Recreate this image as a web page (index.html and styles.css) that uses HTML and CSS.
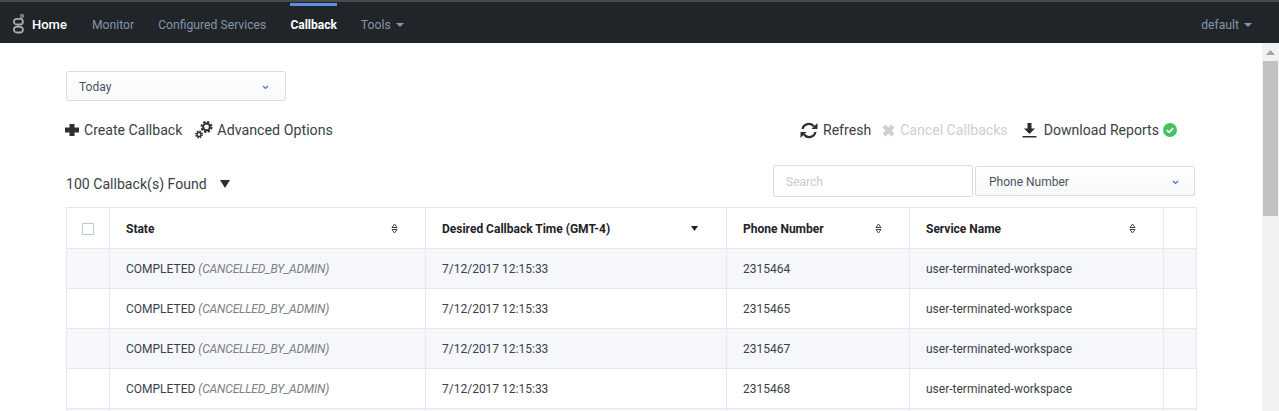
FILE: index.html
```html
<!DOCTYPE html>
<html lang="en">
<head>
<meta charset="utf-8">
<title>Callback</title>
<link rel="stylesheet" href="styles.css">
</head>
<body>
<header class="nav">
  <svg class="logo" width="14" height="20" viewBox="0 0 14 20" fill="none" stroke="#a9abad" stroke-width="1.800"><circle cx="10" cy="2" r="1.400" stroke-width="1.100"/><rect x="1.900" y="4.900" width="9" height="5.600" rx="2.800"/><rect x="1.900" y="12.900" width="9" height="5.600" rx="2.800"/><path d="M6.400 10.500v2.400" stroke-width="1.200"/></svg>
  <a class="nav-link home">Home</a>
  <a class="nav-link monitor">Monitor</a>
  <a class="nav-link services">Configured Services</a>
  <a class="nav-link active">Callback</a>
  <a class="nav-link tools">Tools<span class="caret"></span></a>
  <a class="nav-link user">default<span class="caret"></span></a>
</header>
<div class="viewport">
  <main class="content">
    <div class="select today"><span>Today</span><svg class="chev" width="7" height="5" viewBox="0 0 7 5"><path d="M1 1l2.500 2.500L6 1" fill="none" stroke="#4a6fc4" stroke-width="1.200"/></svg></div>
    <div class="toolbar">
      <div class="group left">
        <button class="action"><svg width="14" height="14" viewBox="0 0 14 14"><path d="M4.500 1h5v3.500H14v5H9.500V13h-5V9.500H0v-5h4.500z" fill="#2b2e33"/></svg>Create Callback</button>
        <button class="action gears"><svg width="18" height="18" viewBox="0 0 18 18" fill="none" stroke="#2b2e33"><circle cx="11.500" cy="6" r="3.400" stroke-width="2"/><circle cx="11.500" cy="6" r="5" stroke-width="2" stroke-dasharray="2.300 1.630"/><circle cx="4" cy="13.500" r="2" stroke-width="1.400"/><circle cx="4" cy="13.500" r="3.200" stroke-width="1.500" stroke-dasharray="1.500 1.010"/></svg>Advanced Options</button>
      </div>
      <div class="group right">
        <button class="action"><svg width="18" height="17" viewBox="0 0 18 17" fill="none"><path d="M2.500 7a6.500 6.500 0 0 1 11.500-2.500" stroke="#2b2e33" stroke-width="2.200"/><path d="M15.500 10a6.500 6.500 0 0 1-11.500 2.500" stroke="#2b2e33" stroke-width="2.200"/><path d="M17.500 1v6h-6z" fill="#2b2e33"/><path d="M.5 16v-6h6z" fill="#2b2e33"/></svg>Refresh</button>
        <button class="action disabled"><svg width="13" height="13" viewBox="0 0 13 13"><path d="M3.500 .5l3 3 3-3 3 3-3 3 3 3-3 3-3-3-3 3-3-3 3-3-3-3z" fill="#ccd0d6"/></svg>Cancel Callbacks</button>
        <button class="action download"><svg width="15" height="15" viewBox="0 0 15 15" fill="#2b2e33"><path d="M5.500 0h4v5.500H13L7.500 11 2 5.500h3.500z"/><path d="M.5 13h14v1.500H.5z"/></svg>Download Reports<svg class="ok" width="14" height="14" viewBox="0 0 14 14"><circle cx="7" cy="7" r="7" fill="#46c263"/><path d="M3.800 7.200l2.300 2.200 4.100-4.300" fill="none" stroke="#fff" stroke-width="1.700"/></svg></button>
      </div>
    </div>
    <div class="filters">
      <div class="found">100 Callback(s) Found<span class="found-caret"></span></div>
      <div class="search-group">
        <div class="search">Search</div>
        <div class="select phone"><span>Phone Number</span><svg class="chev" width="7" height="5" viewBox="0 0 7 5"><path d="M1 1l2.500 2.500L6 1" fill="none" stroke="#4a6fc4" stroke-width="1.200"/></svg></div>
      </div>
    </div>
    <table class="grid">
      <thead>
        <tr>
          <th class="c-check"><span class="check"></span></th>
          <th class="c-state"><div class="th"><span>State</span><svg class="sort" width="7" height="11" viewBox="0 0 7 11" fill="none" stroke="#444"><path d="M3.500 1L1 4.500h5z"/><path d="M3.500 10L1 6.500h5z"/></svg></div></th>
          <th class="c-time"><div class="th"><span>Desired Callback Time (GMT-4)</span><svg class="sort sort-active" width="7" height="5" viewBox="0 0 7 5"><path d="M0 0h7L3.500 5z" fill="#1f2227"/></svg></div></th>
          <th class="c-phone"><div class="th"><span>Phone Number</span><svg class="sort" width="7" height="11" viewBox="0 0 7 11" fill="none" stroke="#444"><path d="M3.500 1L1 4.500h5z"/><path d="M3.500 10L1 6.500h5z"/></svg></div></th>
          <th class="c-service"><div class="th"><span>Service Name</span><svg class="sort" width="7" height="11" viewBox="0 0 7 11" fill="none" stroke="#444"><path d="M3.500 1L1 4.500h5z"/><path d="M3.500 10L1 6.500h5z"/></svg></div></th>
          <th class="c-end"></th>
        </tr>
      </thead>
      <tbody>
        <tr class="odd"><td></td><td>COMPLETED <em>(CANCELLED_BY_ADMIN)</em></td><td>7/12/2017 12:15:33</td><td>2315464</td><td>user-terminated-workspace</td><td></td></tr>
        <tr><td></td><td>COMPLETED <em>(CANCELLED_BY_ADMIN)</em></td><td>7/12/2017 12:15:33</td><td>2315465</td><td>user-terminated-workspace</td><td></td></tr>
        <tr class="odd"><td></td><td>COMPLETED <em>(CANCELLED_BY_ADMIN)</em></td><td>7/12/2017 12:15:33</td><td>2315467</td><td>user-terminated-workspace</td><td></td></tr>
        <tr><td></td><td>COMPLETED <em>(CANCELLED_BY_ADMIN)</em></td><td>7/12/2017 12:15:33</td><td>2315468</td><td>user-terminated-workspace</td><td></td></tr>
        <tr class="odd"><td></td><td></td><td></td><td></td><td></td><td></td></tr>
      </tbody>
    </table>
  </main>
  <aside class="scrollbar">
    <svg class="arrow" width="9" height="5" viewBox="0 0 9 5"><path d="M4.500 0L9 5H0z" fill="#a3a3a3"/></svg>
    <div class="thumb"></div>
  </aside>
</div>
</body>
</html>
```
FILE: styles.css
```css
* { box-sizing: border-box; }
html, body { margin: 0; height: 411px; overflow: hidden; }
body { background: #fff; font-family: Roboto, "Liberation Sans", sans-serif; color: #3a3f47; }

.nav { height: 43px; background: #212429; border-top: 2px solid #4b4b4b; display: flex; align-items: center; padding: 0 27px 0 12px; font-size: 12.200px; }
.logo { flex: none; margin-top: 3px; }
.nav-link { color: #8195ab; display: flex; align-items: center; height: 41px; padding-top: 4px; margin-left: 24px; position: relative; }
.nav-link.home { color: #fff; font-weight: 500; font-size: 13px; margin-left: 6px; }
.nav-link.monitor { margin-left: 25px; }
.nav-link.active { color: #fff; font-weight: 700; font-size: 12px; }
.nav-link.active::before { content: ""; position: absolute; left: 0; right: 0; top: 1px; height: 3px; background: #5c8fe0; }
.nav-link.user { margin-left: auto; }
.caret { width: 0; height: 0; border: 4px solid transparent; border-top-color: #8195ab; border-bottom: 0; margin-left: 5px; margin-top: 1px; }

.viewport { display: flex; height: 368px; overflow: hidden; }
.content { flex: 1; min-width: 0; padding: 28px 66px 0; }
.scrollbar { width: 17px; flex: none; background: #f1f1f1; display: flex; flex-direction: column; align-items: center; padding-top: 7px; }
.arrow { flex: none; }
.thumb { width: 15px; height: 155px; background: #c1c1c1; margin-top: 6px; flex: none; }

.select { border: 1px solid #d9dfe9; border-radius: 2px; background: linear-gradient(#fff, #f8f9fb); display: flex; align-items: center; justify-content: space-between; font-size: 12px; color: #4a5260; padding-top: 1px; }
.today { width: 220px; height: 30px; padding-left: 12px; padding-right: 16px; }
.phone { width: 220px; height: 30px; margin-right: 1px; padding-left: 13px; padding-right: 15px; }
.chev { flex: none; margin-top: 1px; }

.toolbar { display: flex; justify-content: space-between; align-items: center; margin-top: 16px; height: 26px; padding-right: 19px; }
.group { display: flex; align-items: center; gap: 13px; }
.group.left { margin-left: -1px; }
.group.right { gap: 10px; }
.action { display: flex; align-items: center; gap: 5px; border: 0; background: none; padding: 0; font: inherit; font-size: 14.100px; color: #3a3f47; }
.action.gears { gap: 4px; font-size: 14.250px; }
.action.disabled { color: #ccd0d6; margin-left: 1px; }
.action.download { gap: 7px; margin-left: 4px; }
.ok { margin-left: -3px; }

.filters { display: flex; justify-content: space-between; align-items: center; margin-top: 22px; height: 32px; }
.found { font-size: 14.100px; color: #3a3f47; display: flex; align-items: center; padding-top: 5px; }
.found-caret { width: 0; height: 0; border-left: 5.500px solid transparent; border-right: 5.500px solid transparent; border-top: 8px solid #2b2e33; margin-left: 13px; margin-top: 1px; }
.search-group { display: flex; align-items: center; gap: 2px; }
.search { width: 200px; height: 32px; border: 1px solid #d9dfe9; border-radius: 2px; padding: 1px 12px 0; display: flex; align-items: center; font-size: 12px; color: #c3cad5; }

.grid { border-collapse: collapse; table-layout: fixed; width: 1129px; margin-top: 10px; font-size: 12px; }
.grid th, .grid td { border: 1px solid #e4e8ef; padding: 0 16px; color: #3a3f47; text-align: left; overflow: hidden; white-space: nowrap; }
.grid th { height: 41px; color: #1f2227; font-weight: 700; padding-top: 1px; }
.grid td { height: 40px; }
.grid .odd td { background: #f5f7fb; }
.grid em { color: #7c7f85; letter-spacing: -0.150px; }
.c-check { width: 43px; }
.c-state { width: 316px; }
.c-time { width: 301px; }
.c-phone { width: 183px; }
.c-service { width: 254px; }
.c-end { width: 32px; }
.grid th.c-check { text-align: center; padding: 0; }
.check { display: inline-block; width: 12px; height: 12px; border: 1px solid #b9c8d8; vertical-align: middle; }
.th { display: flex; align-items: center; justify-content: space-between; }
.grid th .sort { flex: none; margin-right: 11px; }
.grid th .sort-active { margin-right: 12px; }
```
